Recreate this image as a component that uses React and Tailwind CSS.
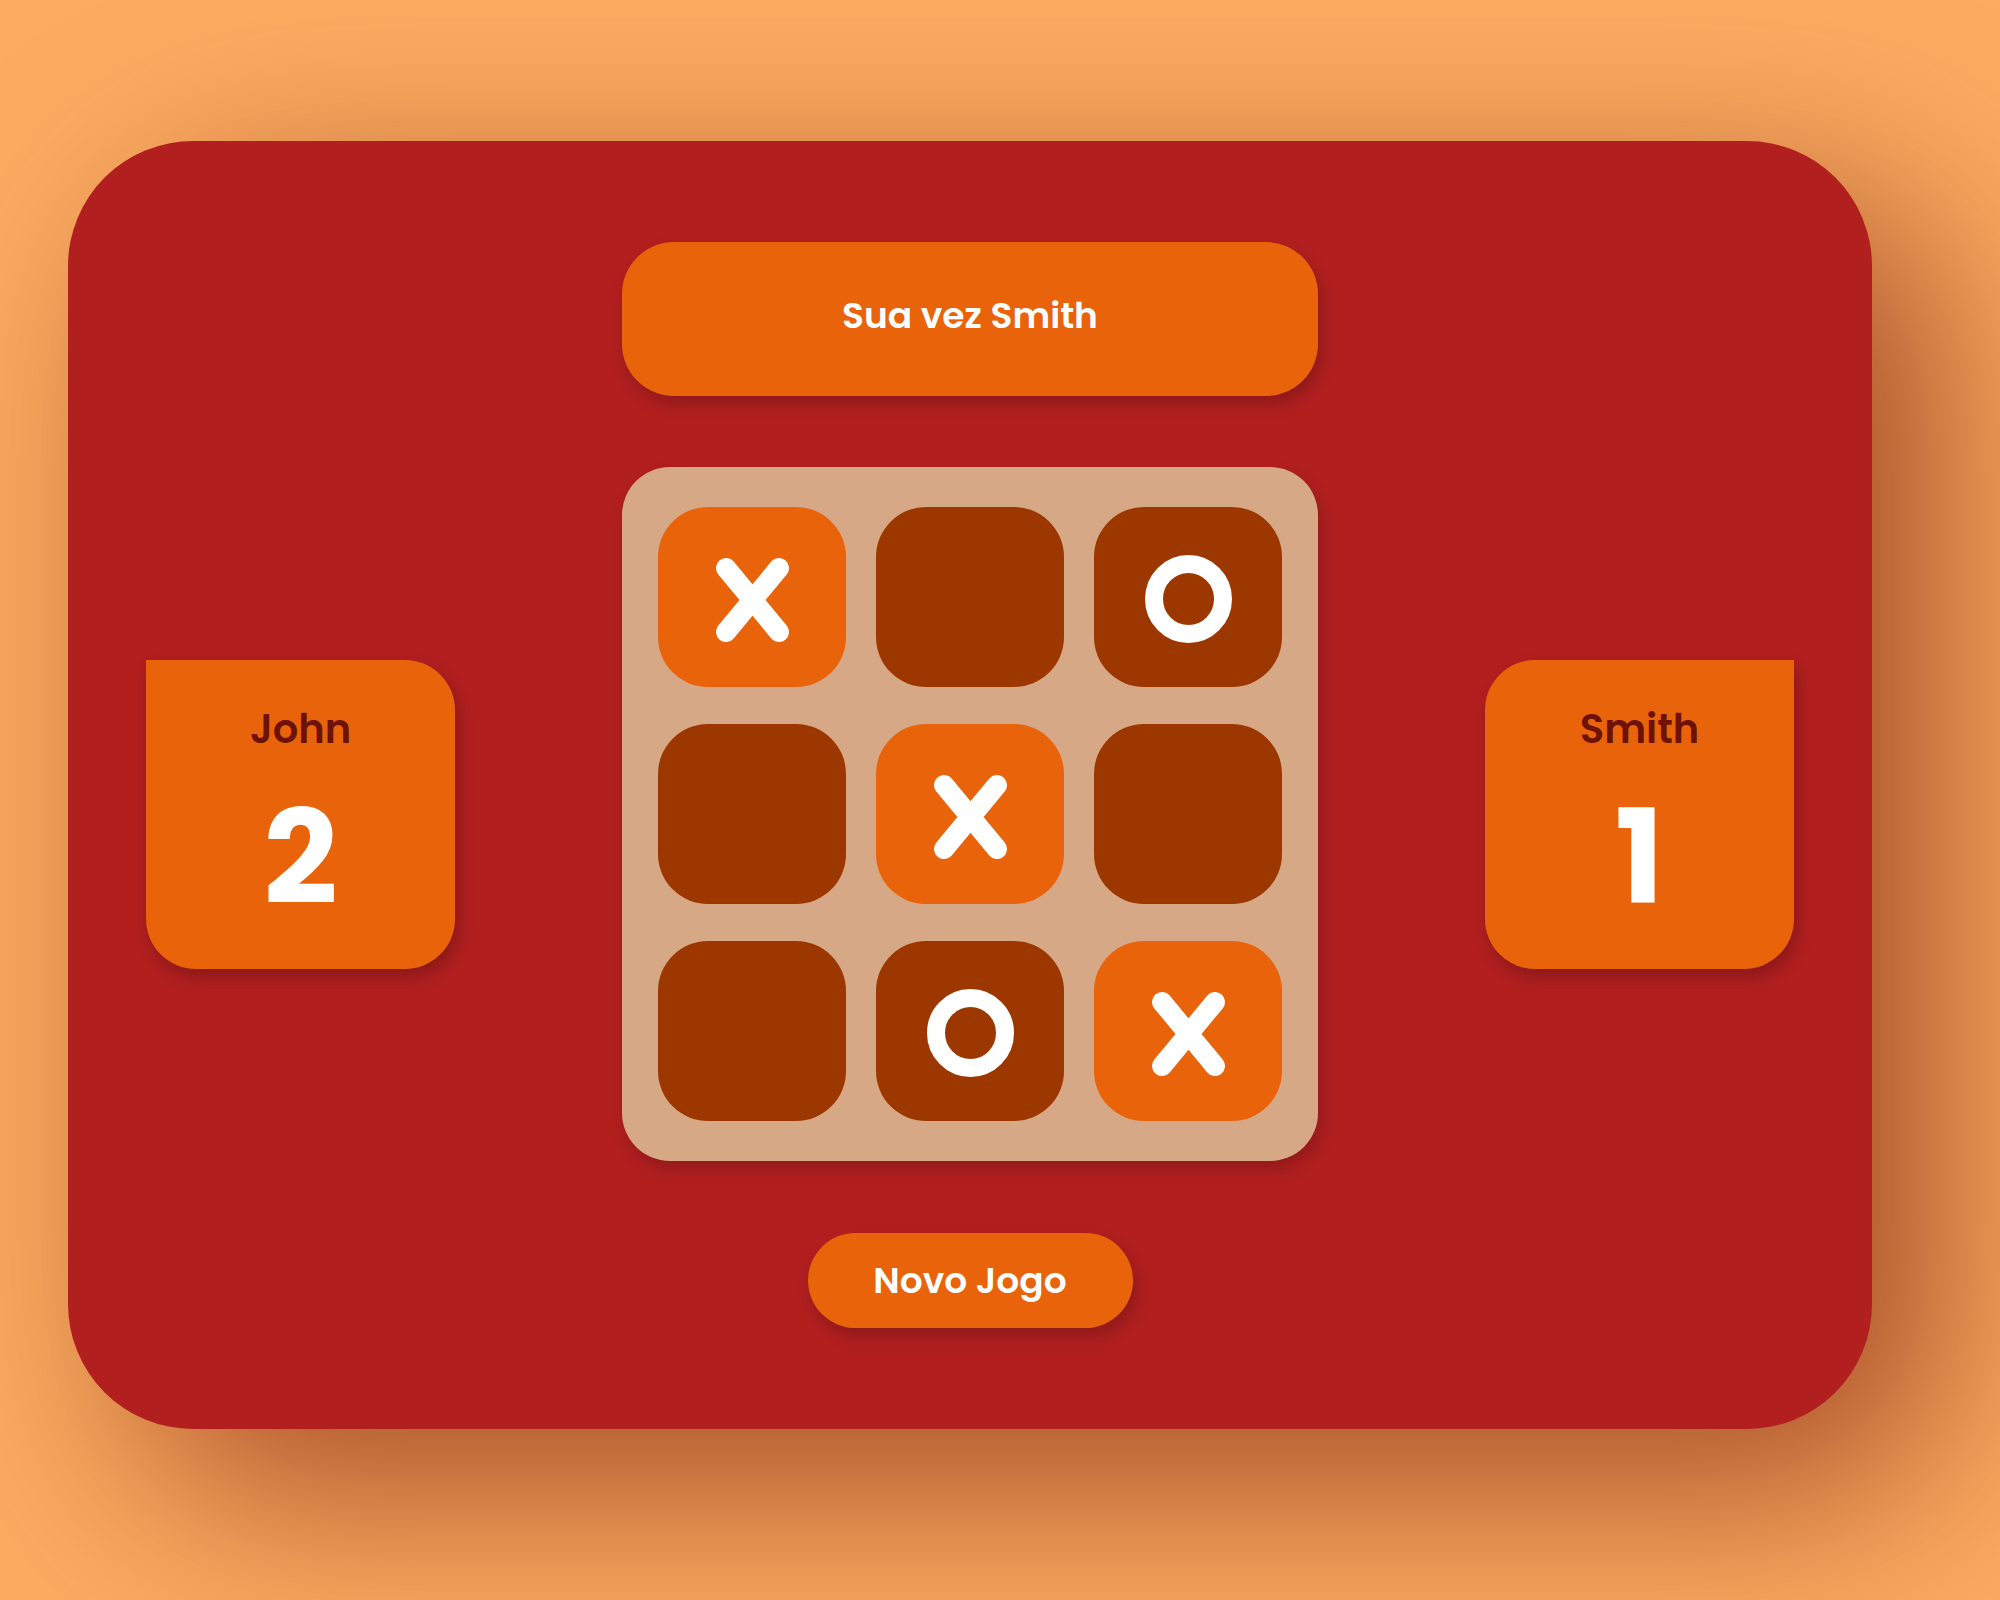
import React from 'react';

const board = ['X', '', 'O', '', 'X', '', '', 'O', 'X'];

const Mark = ({ value }) => {
  if (value === 'X') {
    return (
      <svg width="73" height="84" viewBox="0 0 73 84" className="mt-[6px]">
        <path d="M10 10 L63 74 M63 10 L10 74" stroke="white" strokeWidth="20" strokeLinecap="round" fill="none" />
      </svg>
    );
  }
  if (value === 'O') {
    return (
      <svg width="87" height="88" viewBox="0 0 87 88" className="mt-[4px]">
        <ellipse cx="43.5" cy="44" rx="34.5" ry="35" stroke="white" strokeWidth="18" fill="none" />
      </svg>
    );
  }
  return null;
};

const ScoreCard = ({ name, score, side }) => (
  <div
    className={`w-[309px] h-[309px] bg-[#e9630a] flex flex-col items-center pt-[49px] shadow-[4px_8px_16px_rgba(0,0,0,0.22)] ${
      side === 'left'
        ? 'rounded-tr-[50px] rounded-br-[50px] rounded-bl-[50px]'
        : 'rounded-tl-[50px] rounded-br-[50px] rounded-bl-[50px]'
    }`}
  >
    <span className="text-[40px] leading-none font-semibold text-[#6e1208]">{name}</span>
    <span className="mt-[44px] text-[130px] leading-none font-bold text-white">{score}</span>
  </div>
);

const App = () => {
  return (
    <div
      className="w-[2000px] h-[1600px] bg-[#fcac61] overflow-hidden pt-[141px] pl-[68px]"
      style={{ fontFamily: '"Poppins", "Open Sans", sans-serif' }}
    >
      <div className="w-[1804px] h-[1288px] bg-[#b21f1f] rounded-[125px] shadow-[70px_64px_200px_rgba(110,16,4,0.6)] flex flex-col items-center py-[101px]">
        <div className="w-[696px] h-[154px] bg-[#e9630a] rounded-[52px] flex items-center justify-center shadow-[4px_8px_16px_rgba(0,0,0,0.2)]">
          <span className="text-white text-[36px] leading-none font-semibold pb-[6px]">Sua vez Smith</span>
        </div>

        <div className="w-full mt-[71px] px-[78px] flex items-center justify-between">
          <ScoreCard name="John" score="2" side="left" />

          <div className="w-[696px] h-[694px] bg-[#d6a886] rounded-[48px] px-[36px] py-[40px] grid grid-cols-3 gap-x-[30px] gap-y-[37px] shadow-[4px_8px_16px_rgba(0,0,0,0.18)]">
            {board.map((cell, i) => (
              <div
                key={i}
                className={`h-[180px] rounded-[50px] flex items-center justify-center ${
                  cell === 'X' ? 'bg-[#e9630a]' : 'bg-[#9d3700]'
                }`}
              >
                <Mark value={cell} />
              </div>
            ))}
          </div>

          <ScoreCard name="Smith" score="1" side="right" />
        </div>

        <button className="mt-[72px] w-[325px] h-[95px] rounded-full bg-[#e9630a] text-white text-[36px] font-semibold flex items-center justify-center shadow-[4px_8px_16px_rgba(0,0,0,0.2)]">
          Novo Jogo
        </button>
      </div>
    </div>
  );
};

export default App;
